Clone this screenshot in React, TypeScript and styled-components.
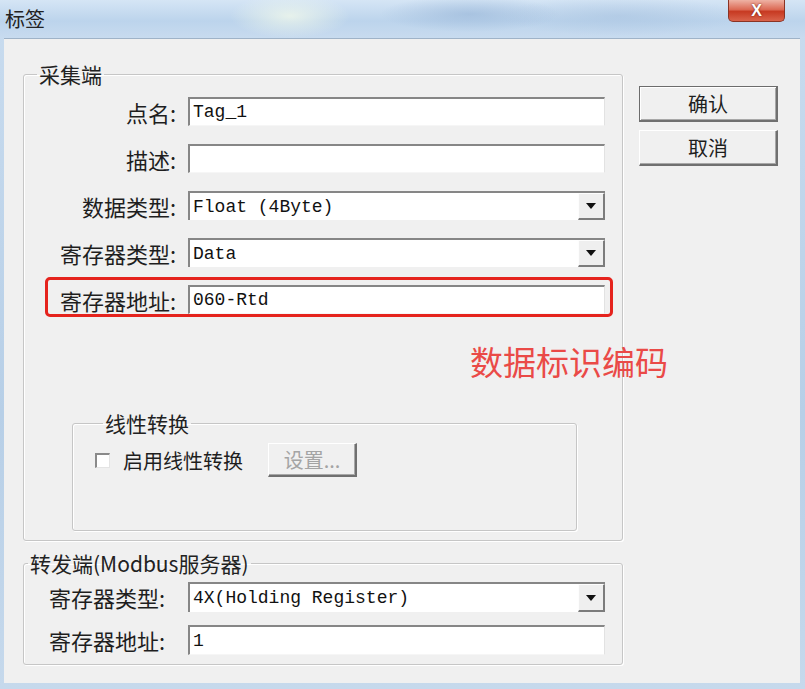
import styled, { createGlobalStyle } from 'styled-components'

const GlobalStyle = createGlobalStyle`
  html, body {
    margin: 0;
    padding: 0;
    background: #c4d8ec;
  }
  body {
    font-family: "Noto Sans CJK SC", "Liberation Sans", sans-serif;
  }
`

const Window = styled.div`
  width: 805px;
  height: 689px;
  display: flex;
  flex-direction: column;
  background: linear-gradient(180deg, #c9dcef 0%, #b7cfe7 60%, #c6d9ec 100%);
  overflow: hidden;
`

const TitleBar = styled.div`
  height: 38px;
  flex-shrink: 0;
  display: flex;
  align-items: flex-start;
  justify-content: space-between;
  background:
    radial-gradient(ellipse 60px 22px at 290px 16px, rgba(240, 248, 235, 0.8), transparent),
    radial-gradient(ellipse 90px 18px at 470px 14px, rgba(150, 180, 215, 0.6), transparent),
    radial-gradient(ellipse 120px 20px at 620px 16px, rgba(165, 192, 222, 0.5), transparent),
    linear-gradient(180deg, #d5e5f5 0%, #bcd4ec 55%, #c8dbef 100%);
`

const Title = styled.div`
  margin: 7px 0 0 5px;
  font-size: 20px;
  line-height: 24px;
  color: #222;
`

const CloseButton = styled.div`
  width: 57px;
  height: 22px;
  margin-right: 20px;
  box-sizing: border-box;
  border: 1px solid #8a3324;
  border-top: none;
  border-radius: 0 0 5px 5px;
  background: linear-gradient(180deg, #eeb2a4 0%, #dc6a55 45%, #c73a22 55%, #d9634b 100%);
  display: flex;
  align-items: center;
  justify-content: center;
  color: #fff;
  font-family: "Liberation Sans", sans-serif;
  font-weight: bold;
  font-size: 16px;
  text-shadow: 0 0 2px #6a1a10;
`

const Client = styled.div`
  flex: 1;
  margin: 0 5px 6px 4px;
  background: #f0f0f0;
  border-top: 1px solid #9fb3c8;
  padding: 24px 0 0 19px;
  display: flex;
  align-items: flex-start;
  gap: 16px;
`

const LeftColumn = styled.div`
  width: 600px;
  display: flex;
  flex-direction: column;
  gap: 11px;
`

const GroupBox = styled.fieldset<{ $padding: string; $margin?: string }>`
  margin: ${(props) => props.$margin ?? '0'};
  padding: ${(props) => props.$padding};
  border: 1px solid #c6c6c6;
  border-radius: 3px;
  box-shadow: inset 1px 1px 0 #fff, 1px 1px 0 #fff;
  min-inline-size: 0;
`

const Legend = styled.legend<{ $offset: number }>`
  margin-left: ${(props) => props.$offset}px;
  padding: 0 2px;
  font-size: 21px;
  line-height: 22px;
  color: #222;
  white-space: nowrap;
`

const Rows = styled.div<{ $gap: number }>`
  display: flex;
  flex-direction: column;
  gap: ${(props) => props.$gap}px;
`

const FormRow = styled.div<{ $height: number }>`
  display: flex;
  align-items: center;
  height: ${(props) => props.$height}px;
  position: relative;
`

const HighlightRow = styled(FormRow)`
  &::after {
    content: '';
    position: absolute;
    left: 21px;
    right: 9px;
    top: -8px;
    bottom: -3px;
    border: 3px solid #e5231d;
    border-radius: 5px;
    pointer-events: none;
  }
`

const Annotation = styled.div`
  position: absolute;
  left: 446px;
  top: 58px;
  font-size: 33px;
  line-height: 36px;
  color: #ea4a47;
  white-space: nowrap;
  pointer-events: none;
`

const FieldLabel = styled.div<{ $width: number; $gap: number }>`
  width: ${(props) => props.$width}px;
  margin-right: ${(props) => props.$gap}px;
  flex-shrink: 0;
  text-align: right;
  font-size: 22px;
  line-height: 28px;
  color: #1e1e1e;
  white-space: nowrap;
`

const TextBox = styled.div`
  width: 417px;
  height: 100%;
  box-sizing: border-box;
  background: #fff;
  border-top: 2px solid #868686;
  border-left: 2px solid #868686;
  border-right: 1px solid #e2e2e2;
  border-bottom: 1px solid #f6f6f6;
  padding-left: 3px;
  display: flex;
  align-items: center;
  font-family: "Liberation Mono", "Noto Sans CJK SC", monospace;
  font-size: 18px;
  color: #111;
  white-space: nowrap;
`

const ComboBox = styled(TextBox)`
  border-right: none;
  border-bottom: none;
`

const DropButton = styled.div`
  margin-left: auto;
  width: 27px;
  height: 100%;
  box-sizing: border-box;
  background: #efefef;
  border-top: 1px solid #fdfdfd;
  border-left: 1px solid #fdfdfd;
  border-right: 2px solid #7c7c7c;
  border-bottom: 2px solid #7c7c7c;
  display: flex;
  align-items: center;
  justify-content: center;
`

const CheckRow = styled.div`
  display: flex;
  align-items: center;
  height: 34px;
`

const CheckBox = styled.span`
  width: 15px;
  height: 15px;
  box-sizing: border-box;
  background: #fff;
  border-top: 2px solid #8a8a8a;
  border-left: 2px solid #8a8a8a;
  border-right: 1px solid #e4e4e4;
  border-bottom: 1px solid #e4e4e4;
  margin-right: 13px;
`

const CheckText = styled.span`
  font-size: 20px;
  color: #1e1e1e;
`

const PushButton = styled.div<{ $width: number; $height: number; $default?: boolean; $disabled?: boolean }>`
  width: ${(props) => props.$width}px;
  height: ${(props) => props.$height}px;
  box-sizing: border-box;
  background: #f0f0f0;
  border-top: 1px solid ${(props) => (props.$default ? '#6c6c6c' : '#fff')};
  border-left: 1px solid ${(props) => (props.$default ? '#6c6c6c' : '#fff')};
  border-right: 2px solid #707070;
  border-bottom: 2px solid #707070;
  box-shadow: ${(props) =>
    props.$default ? 'inset 1px 1px 0 #fff, inset -1px -1px 0 #a8a8a8' : 'inset -1px -1px 0 #a8a8a8'};
  display: flex;
  align-items: center;
  justify-content: center;
  font-size: 20px;
  color: ${(props) => (props.$disabled ? '#a4a4a4' : '#1e1e1e')};
`

const ButtonColumn = styled.div`
  padding-top: 23px;
  display: flex;
  flex-direction: column;
  gap: 8px;
`

function Arrow() {
  return (
    <svg width="10" height="6" viewBox="0 0 10 6">
      <path d="M0 0 H10 L5 6 Z" fill="#111" />
    </svg>
  )
}

interface FieldProps {
  label: string
  value: string
  combo?: boolean
  labelWidth: number
  gap: number
}

function FieldContent(props: FieldProps) {
  return (
    <>
      <FieldLabel $width={props.labelWidth} $gap={props.gap}>
        {props.label}
      </FieldLabel>
      {props.combo ? (
        <ComboBox>
          {props.value}
          <DropButton>
            <Arrow />
          </DropButton>
        </ComboBox>
      ) : (
        <TextBox>{props.value}</TextBox>
      )}
    </>
  )
}

export default function App() {
  return (
    <>
      <GlobalStyle />
      <Window>
        <TitleBar>
          <Title>标签</Title>
          <CloseButton>X</CloseButton>
        </TitleBar>
        <Client>
          <LeftColumn>
            <GroupBox $padding="12px 0 9px 0">
              <Legend $offset={13}>采集端</Legend>
              <Rows $gap={18}>
                <FormRow $height={29}>
                  <FieldContent label="点名:" value="Tag_1" labelWidth={152} gap={12} />
                </FormRow>
                <FormRow $height={29}>
                  <FieldContent label="描述:" value="" labelWidth={152} gap={12} />
                </FormRow>
                <FormRow $height={29}>
                  <FieldContent label="数据类型:" value="Float (4Byte)" combo labelWidth={152} gap={12} />
                </FormRow>
                <FormRow $height={29}>
                  <FieldContent label="寄存器类型:" value="Data" combo labelWidth={152} gap={12} />
                </FormRow>
                <HighlightRow $height={29}>
                  <FieldContent label="寄存器地址:" value="060-Rtd" labelWidth={152} gap={12} />
                  <Annotation>数据标识编码</Annotation>
                </HighlightRow>
              </Rows>
              <GroupBox $margin="98px 45px 0 48px" $padding="9px 0 53px 22px">
                <Legend $offset={8}>线性转换</Legend>
                <CheckRow>
                  <CheckBox />
                  <CheckText>启用线性转换</CheckText>
                  <PushButton $width={89} $height={34} $disabled style={{ marginLeft: 25 }}>
                    设置...
                  </PushButton>
                </CheckRow>
              </GroupBox>
            </GroupBox>
            <GroupBox $padding="8px 0 9px 0">
              <Legend $offset={4}>转发端(Modbus服务器)</Legend>
              <Rows $gap={13}>
                <FormRow $height={30}>
                  <FieldContent label="寄存器类型:" value="4X(Holding Register)" combo labelWidth={141} gap={23} />
                </FormRow>
                <FormRow $height={30}>
                  <FieldContent label="寄存器地址:" value="1" labelWidth={141} gap={23} />
                </FormRow>
              </Rows>
            </GroupBox>
          </LeftColumn>
          <ButtonColumn>
            <PushButton $width={139} $height={36} $default>
              确认
            </PushButton>
            <PushButton $width={139} $height={36}>
              取消
            </PushButton>
          </ButtonColumn>
        </Client>
      </Window>
    </>
  )
}
